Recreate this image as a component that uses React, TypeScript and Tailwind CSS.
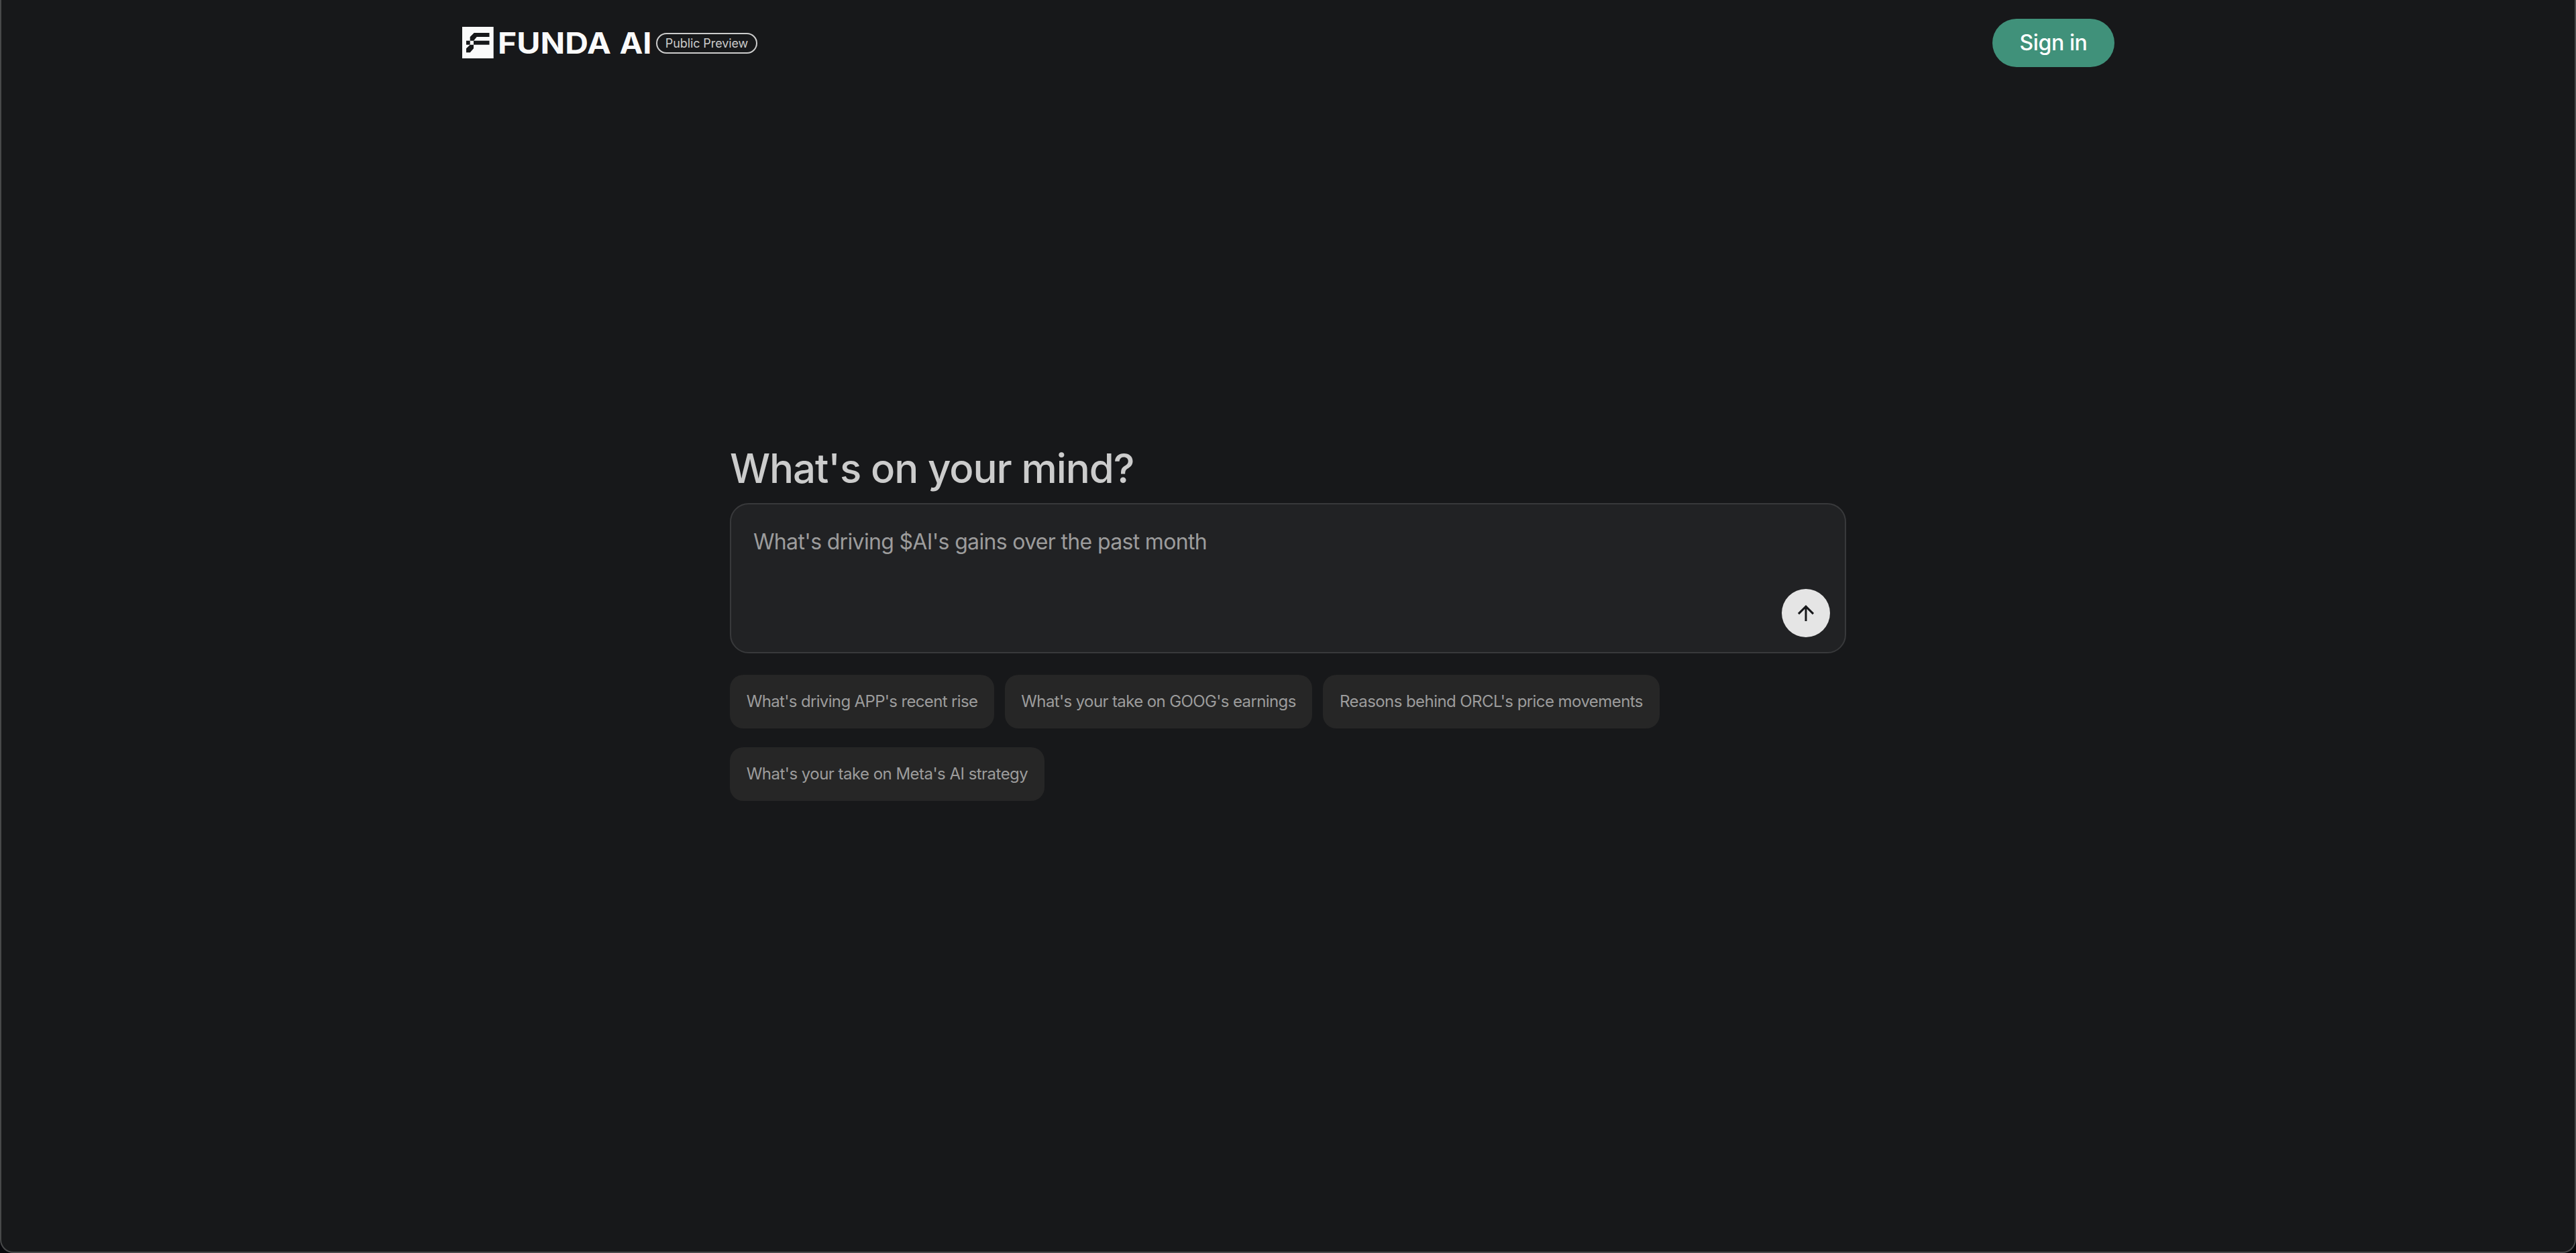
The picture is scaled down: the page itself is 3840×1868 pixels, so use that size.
import React from "react";

const suggestions = [
  { text: "What's driving APP's recent rise", width: "w-[394px]", spacing: "tracking-[-0.65px]" },
  { text: "What's your take on GOOG's earnings", width: "w-[458px]", spacing: "tracking-[-0.62px]" },
  { text: "Reasons behind ORCL's price movements", width: "w-[502px]", spacing: "tracking-[-0.57px]" },
  { text: "What's your take on Meta's AI strategy", width: "w-[469px]", spacing: "tracking-[-0.53px]" },
];

function Logo() {
  return (
    <svg className="w-[286px] h-[67px] overflow-visible" viewBox="0 -10 286 67" fill="none">
      <rect width="46.700" height="47" fill="#fafafa" />
      <g fill="#17181a">
        <path d="M17.7 9H40.5V15H21.7L17 20.7H11.700V15Z" />
        <path d="M6 20.7H11.7V26.7H6Z" />
        <path d="M17 20.7H40.5V26.7H17Z" />
        <path d="M11.7 26.7H17V32.3L11.7 38.3H6V32.3Z" />
      </g>
      {/* wordmark */}
      <g fill="#fafafa" fontSize="43.500" fontWeight="700">
        <text x="53" y="40" textLength="169" lengthAdjust="spacingAndGlyphs">
          FUNDA
        </text>
        <text x="234.500" y="40" textLength="48" lengthAdjust="spacingAndGlyphs">
          AI
        </text>
      </g>
    </svg>
  );
}

function Header() {
  return (
    <header className="flex items-start justify-between pl-[687px] pr-[686px] pt-[28px]">
      <div className="flex items-center pt-[2px]">
        <Logo />
        <span className="flex items-center justify-center w-[151px] h-[31px] ml-[3px] mt-[2px] rounded-full border-2 border-[#cccccc] text-[18px] tracking-[-0.1px] text-[#cccccc] whitespace-nowrap">
          Public Preview
        </span>
      </div>
      <button className="w-[182px] h-[72px] rounded-full bg-[#40917a] text-[32px] font-medium tracking-[-0.4px] text-white">
        Sign in
      </button>
    </header>
  );
}

function PromptBox() {
  return (
    <div className="flex flex-col justify-between w-full h-[224px] rounded-[28px] border-2 border-[#38393b] bg-[#212224] pl-[33px] pr-[22px] pt-[34px] pb-[22px]">
      <p className="text-[32px] leading-[44px] tracking-[-0.67px] text-[#9c9c9c] whitespace-nowrap">
        What's driving $AI's gains over the past month
      </p>
      <button className="flex items-center justify-center self-end w-[72px] h-[72px] rounded-full bg-[#e5e5e5]">
        <svg className="w-[36px] h-[36px]" viewBox="0 0 36 36" fill="none" stroke="#17181a" strokeWidth="3">
          <path d="M18 30V8.500M7 19.100L18 8.100L29 19.100" />
        </svg>
      </button>
    </div>
  );
}

function App() {
  return (
    <div className="w-full h-[1868px] bg-[#08080c] font-['Inter',sans-serif]">
      <div className="w-full h-full rounded-b-[20px] border-2 border-t-0 border-[#48494a] bg-[#17181a]">
        <Header />
        <main className="w-[1664px] mx-auto pt-[560px]">
          <h1 className="text-[60px] leading-[76px] font-medium tracking-[-1.1px] text-[#cccccc] whitespace-nowrap">
            What's on your mind?
          </h1>
          <div className="pt-[14px]">
            <PromptBox />
          </div>
          <div className="flex flex-wrap gap-x-[16px] gap-y-[28px] pt-[32px]">
            {suggestions.map((item) => (
              <button
                key={item.text}
                className={`${item.width} ${item.spacing} h-[80px] rounded-[20px] bg-[#262626] text-[24px] text-[#9c9c9c] whitespace-nowrap`}
              >
                {item.text}
              </button>
            ))}
          </div>
        </main>
      </div>
    </div>
  );
}

export default App;
